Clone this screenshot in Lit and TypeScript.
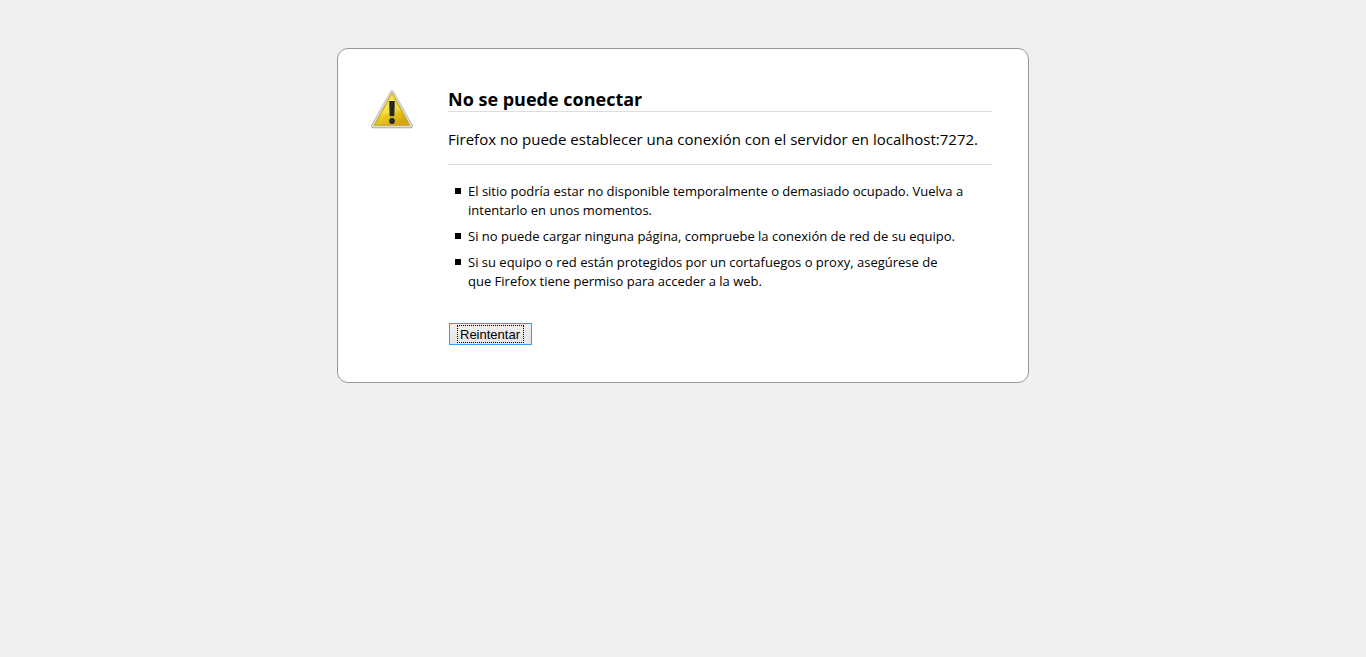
import { LitElement, html, css, svg } from "lit";
import { customElement, property } from "lit/decorators.js";

const warningIcon = svg`
  <defs>
    <linearGradient id="rim" x1="0" y1="0" x2="0" y2="1">
      <stop offset="0" stop-color="#c9cacb" />
      <stop offset="0.8" stop-color="#b3b4b6" />
      <stop offset="1" stop-color="#98999c" />
    </linearGradient>
    <linearGradient id="face" x1="0" y1="0" x2="0.6" y2="1">
      <stop offset="0" stop-color="#f7ea3c" />
      <stop offset="0.55" stop-color="#f0d824" />
      <stop offset="1" stop-color="#d5a512" />
    </linearGradient>
  </defs>
  <path d="M22 4.4 L40.6 38 H3.4 Z" fill="#dcdcde" stroke="url(#rim)" stroke-width="4.6" stroke-linejoin="round" />
  <path d="M22 4.4 L40.6 38 H3.4 Z" fill="#dcdcde" stroke="#dcdcde" stroke-width="3" stroke-linejoin="round" />
  <path d="M22 5 L39.6 37.2 H4.4 Z" fill="url(#face)" stroke="#c9a920" stroke-width="1.2" stroke-linejoin="round" />
  <path d="M22 6.6 L31 22.6 Q20 24 10 28 L21.6 6.6 Z" fill="#fffbb0" opacity="0.25" />
  <path d="M19.2 13 H24.8 L24.3 28.2 H19.7 Z" fill="#262626" />
  <circle cx="22" cy="33" r="2.9" fill="#262626" />
`;

@customElement("app-root")
export class AppRoot extends LitElement {
  @property() host = "localhost:7272";

  private hints = [
    "El sitio podría estar no disponible temporalmente o demasiado ocupado. Vuelva a intentarlo en unos momentos.",
    "Si no puede cargar ninguna página, compruebe la conexión de red de su equipo.",
    "Si su equipo o red están protegidos por un cortafuegos o proxy, asegúrese de que\u00a0Firefox tiene permiso para acceder a la web.",
  ];

  static styles = css`
    :host {
      display: block;
      box-sizing: border-box;
      min-height: 100vh;
      padding: 48px 16px;
      background: #f0f0f0;
      color: #000;
      font-family: "Segoe UI", "Open Sans", "Noto Sans", sans-serif;
    }
    .card {
      box-sizing: border-box;
      display: flex;
      gap: 34px;
      max-width: 692px;
      margin: 0 auto;
      padding: 36px 36px 37px 32px;
      background: #fff;
      border: 1px solid #999;
      border-radius: 11px;
    }
    .icon {
      flex: none;
      width: 44px;
      height: 44px;
      margin-top: 3px;
    }
    .content {
      flex: 1;
      min-width: 0;
    }
    .title {
      margin: 0;
      padding-top: 2px;
      border-bottom: 1px solid #ddd;
      font-size: 18px;
      line-height: 24px;
    }
    .summary {
      margin: 0;
      padding: 17px 0 15px;
      border-bottom: 1px solid #ddd;
      font-size: 15px;
      line-height: 20px;
    }
    .hints {
      margin: 17px 24px 32px 0;
      padding: 0 0 0 20px;
      list-style: none;
      font-size: 13px;
      line-height: 19px;
    }
    .hint {
      display: flex;
      margin-bottom: 7px;
    }
    .hint::before {
      content: "";
      flex: none;
      width: 6px;
      height: 6px;
      margin: 6px 7px 0 -13px;
      background: #000;
    }
    .retry {
      display: block;
      margin: 0 0 0 1px;
      padding: 1px 7px;
      border: 1px solid #3399ff;
      border-radius: 0;
      background: linear-gradient(#f0f0f0, #e5e5e5);
      color: #000;
      font-family: "Liberation Sans", Arial, sans-serif;
      font-size: 13px;
      line-height: 15px;
    }
    .label {
      display: block;
      padding: 1px 3px 0 2px;
      border: 1px dotted #000;
    }
  `;

  render() {
    return html`
      <main class="card">
        <svg class="icon" viewBox="0 0 44 44" role="img" aria-label="Advertencia">${warningIcon}</svg>
        <div class="content">
          <h1 class="title">No se puede conectar</h1>
          <p class="summary">Firefox no puede establecer una conexión con el servidor en ${this.host}.</p>
          <ul class="hints">
            ${this.hints.map((hint) => html`<li class="hint"><span>${hint}</span></li>`)}
          </ul>
          <button class="retry" type="button"><span class="label">Reintentar</span></button>
        </div>
      </main>
    `;
  }
}
